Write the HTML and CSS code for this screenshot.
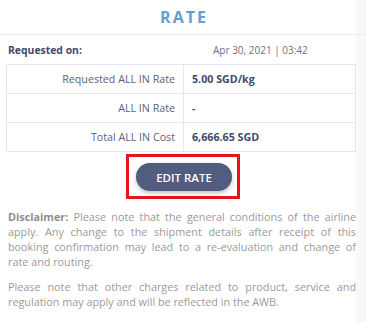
FILE: index.html
```
<!DOCTYPE html>
<html>
<head>
<meta charset="utf-8">
<link rel="stylesheet" href="styles.css">
</head>
<body>
<div class="panel">
  <header class="header"><h1 class="title">RATE</h1></header>
  <section class="content">
    <div class="req-row">
      <span class="req-label">Requested on:</span>
      <span class="req-date">Apr 30, 2021 | 03:42</span>
    </div>
    <table class="rates">
      <tr><td class="lbl">Requested ALL IN Rate</td><td class="val">5.00 SGD/kg</td></tr>
      <tr><td class="lbl">ALL IN Rate</td><td class="val">-</td></tr>
      <tr><td class="lbl">Total ALL IN Cost</td><td class="val">6,666.65 SGD</td></tr>
    </table>
    <div class="actions">
      <div class="highlight"><button class="edit-btn">EDIT RATE</button></div>
    </div>
    <div class="disclaimer">
      <p class="para">
        <span class="line"><b>Disclaimer:</b> Please note that the general conditions of the airline</span>
        <span class="line">apply. Any change to the shipment details after receipt of this</span>
        <span class="line">booking confirmation may lead to a re-evaluation and change of</span>
        <span class="line last">rate and routing.</span>
      </p>
      <p class="para">
        <span class="line">Please note that other charges related to product, service and</span>
        <span class="line last">regulation may apply and will be reflected in the AWB.</span>
      </p>
    </div>
  </section>
</div>
</body>
</html>
```
FILE: styles.css
```
html, body {
  margin: 0;
  padding: 0;
}
body {
  width: 366px;
  height: 322px;
  overflow: hidden;
  font-family: "Open Sans", "Liberation Sans", sans-serif;
  background: linear-gradient(to right, #ffffff 355px, #f9f9f9 357px, #f6f6f6 366px);
}
.panel {
  width: 366px;
}
.header {
  height: 34px;
  border-bottom: 1px solid #ececec;
  display: flex;
  align-items: center;
  justify-content: center;
}
.title {
  margin: 0;
  font-size: 16px;
  font-weight: 700;
  letter-spacing: 2px;
  color: #629fcc;
  padding-left: 2px;
}
.content {
  padding: 0 10px 0 6px;
  width: 350px;
}
.req-row {
  display: grid;
  grid-template-columns: 205px 1fr;
  height: 29px;
  align-items: center;
  padding-left: 2px;
  font-size: 10px;
}
.req-label {
  font-weight: 700;
  font-size: 10.4px;
  color: #3f4a6a;
}
.req-date {
  color: #6c7186;
}
.rates {
  width: 350px;
  border-collapse: collapse;
  font-size: 10.7px;
}
.rates td {
  border: 1px solid #e6e6ef;
  height: 29px;
  padding: 0 8px;
  box-sizing: border-box;
}
.lbl {
  width: 177px;
  text-align: right;
  color: #5c6279;
}
.val {
  font-weight: 700;
  color: #3f4a6a;
}
.actions {
  display: flex;
  justify-content: center;
  margin-top: 2px;
  padding-left: 4px;
}
.highlight {
  border: 3px solid #e6141e;
  padding: 6px 5px 5px 7px;
  width: 114px;
  height: 45px;
  box-sizing: border-box;
  display: flex;
}
.edit-btn {
  width: 96px;
  height: 28px;
  border: none;
  border-radius: 14px;
  background: #525c7e;
  color: #ffffff;
  font-family: "Open Sans", "Liberation Sans", sans-serif;
  font-size: 11.5px;
  font-weight: 600;
  box-shadow: 0 2px 4px rgba(0, 0, 0, 0.25);
  padding: 0;
}
.disclaimer {
  margin-top: 10px;
  padding-left: 2px;
  font-size: 10.8px;
  color: #9a9a9a;
  line-height: 15px;
}
.disclaimer b {
  color: #8e8e8e;
}
.para {
  margin: 0 0 10px 0;
}
.line {
  display: block;
  text-align: justify;
  text-align-last: justify;
}
.line.last {
  text-align-last: left;
}
```
